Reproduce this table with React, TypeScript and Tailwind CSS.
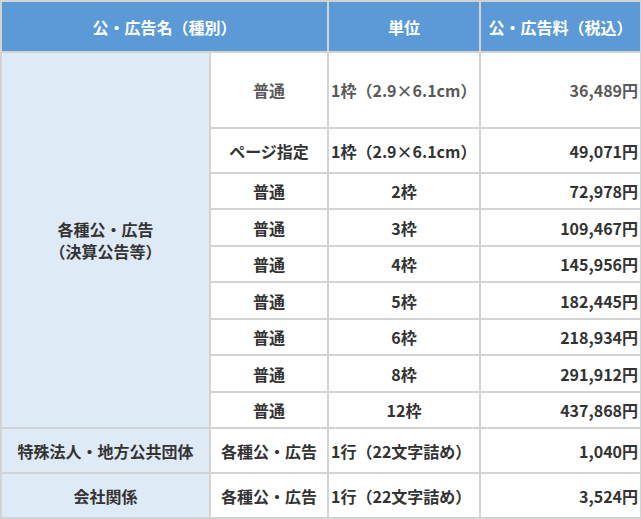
const rows = [
  { type: '普通', unit: '1枠（2.9×6.1cm）', price: '36,489円', left: true, h: 'h-[76px]', muted: true },
  { type: 'ページ指定', unit: '1枠（2.9×6.1cm）', price: '49,071円', left: true, h: 'h-[45px]' },
  { type: '普通', unit: '2枠', price: '72,978円', h: 'h-[36px]' },
  { type: '普通', unit: '3枠', price: '109,467円', h: 'h-[37px]' },
  { type: '普通', unit: '4枠', price: '145,956円', h: 'h-[36px]' },
  { type: '普通', unit: '5枠', price: '182,445円', h: 'h-[37px]' },
  { type: '普通', unit: '6枠', price: '218,934円', h: 'h-[36px]' },
  { type: '普通', unit: '8枠', price: '291,912円', h: 'h-[37px]' },
  { type: '普通', unit: '12枠', price: '437,868円', h: 'h-[36px]' },
]

const others = [
  { name: '特殊法人・地方公共団体', type: '各種公・広告', unit: '1行（22文字詰め）', price: '1,040円' },
  { name: '会社関係', type: '各種公・広告', unit: '1行（22文字詰め）', price: '3,524円' },
]

const cell = 'border-2 border-[#d3d3d3] px-[2px] align-middle'

export default function App() {
  return (
    <div className="w-[641px] h-[519px] bg-white text-[16px] font-bold text-[#333]" style={{ fontFamily: '"Noto Sans CJK JP", "Noto Sans", sans-serif' }}>
      <table className="w-[640px] table-fixed border-collapse">
        <colgroup>
          <col className="w-[209px]" />
          <col className="w-[118px]" />
          <col className="w-[152px]" />
          <col className="w-[161px]" />
        </colgroup>
        <thead>
          <tr className="h-[51px] bg-[#5b9ad6] text-white">
            <th colSpan={2} className={`${cell} text-center font-bold`}>公・広告名（種別）</th>
            <th className={`${cell} text-center font-bold`}>単位</th>
            <th className={`${cell} text-center font-bold`}>公・広告料（税込）</th>
          </tr>
        </thead>
        <tbody>
          {rows.map((r, i) => (
            <tr key={i} className={`${r.h} ${r.muted ? 'text-[#5a5a5a]' : ''}`}>
              {i === 0 && (
                <td rowSpan={rows.length} className={`${cell} bg-[#deeaf6] text-center text-[#333] leading-[22px]`}>
                  各種公・広告
                  <br />
                  （決算公告等）
                </td>
              )}
              <td className={`${cell} text-center`}>{r.type}</td>
              <td className={`${cell} ${r.left ? 'text-left' : 'text-center'}`}>{r.unit}</td>
              <td className={`${cell} text-right`}>{r.price}</td>
            </tr>
          ))}
          {others.map((r, i) => (
            <tr key={i} className="h-[45px]">
              <td className={`${cell} bg-[#deeaf6] text-center`}>{r.name}</td>
              <td className={`${cell} text-center`}>{r.type}</td>
              <td className={`${cell} text-left`}>{r.unit}</td>
              <td className={`${cell} text-right`}>{r.price}</td>
            </tr>
          ))}
        </tbody>
      </table>
    </div>
  )
}
